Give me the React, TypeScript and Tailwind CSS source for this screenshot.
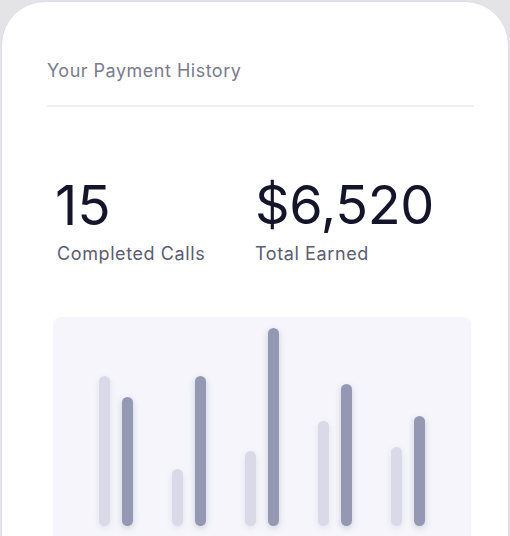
import React from 'react';

const groups = [
  { light: 150, dark: 129 },
  { light: 57, dark: 150 },
  { light: 75, dark: 198 },
  { light: 105, dark: 142 },
  { light: 79, dark: 110 },
];

const font = { fontFamily: 'Inter, "Noto Sans", sans-serif' };

export default function App() {
  return (
    <div className="h-[536px] overflow-hidden bg-[#e4e4e6] px-px pt-px" style={font}>
      <div className="h-[600px] rounded-t-[44px] border border-[#dcdcef] bg-white pl-[45px] pr-[34px] pt-[56px]">
        {/* Header */}
        <h2 className="text-[18px] leading-[26px] tracking-[0.5px] text-[#7b7b8e]">Your Payment History</h2>
        <div className="mt-[21px] h-[2px] bg-[#efeff5]" />

        {/* Stats */}
        <div className="mt-[70px] flex pl-[8px]">
          <div className="w-[200px]">
            <div className="text-[55px] leading-[56px] text-[#14142b]">15</div>
            <div className="ml-[2px] mt-[9px] text-[18px] leading-[24px] tracking-[0.6px] text-[#5b5b72]">Completed Calls</div>
          </div>
          <div>
            <div className="text-[54px] leading-[56px] tracking-[-0.3px] text-[#14142b]">$6,520</div>
            <div className="mt-[9px] text-[18px] leading-[24px] tracking-[0.6px] text-[#5b5b72]">Total Earned</div>
          </div>
        </div>

        {/* Chart */}
        <div className="ml-[6px] mr-[3px] mt-[51px] flex h-[230px] items-end justify-center gap-[38.5px] rounded-t-[8px] bg-[#f5f5fb] pb-[21px]">
          {groups.map((g, i) => (
            <div key={i} className="flex items-end gap-[12.5px]">
              <div
                className="w-[11px] rounded-full bg-[#d9d9e7] shadow-[0_2px_6px_rgba(120,120,160,0.15)]"
                style={{ height: g.light }}
              />
              <div
                className="w-[11px] rounded-full bg-[#9598b3] shadow-[0_2px_6px_rgba(90,90,130,0.25)]"
                style={{ height: g.dark }}
              />
            </div>
          ))}
        </div>
      </div>
    </div>
  );
}
